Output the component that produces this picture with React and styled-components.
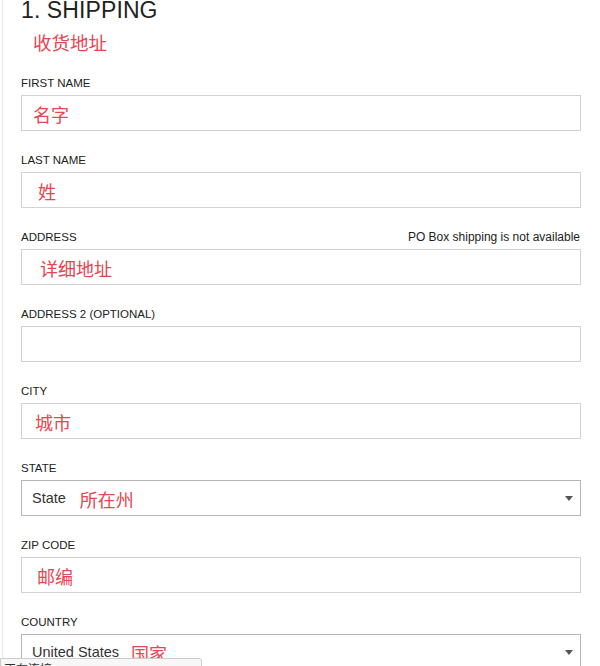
import React from "react";
import styled, { createGlobalStyle } from "styled-components";

const GlobalStyle = createGlobalStyle`
  body {
    margin: 0;
    background: #fff;
    font-family: "Liberation Sans", Arial, sans-serif;
    overflow: hidden;
  }
`;

const Page = styled.div`
  margin-left: 2px;
  border-left: 1px solid #e8e8e8;
  padding-left: 18px;
  width: 560px;
  min-height: 700px;
`;

const Title = styled.h1`
  margin: 0;
  font-size: 23px;
  line-height: 21px;
  font-weight: normal;
  color: #222;
  letter-spacing: 0.1px;
`;

const Subtitle = styled.div`
  margin-top: 12px;
  padding-left: 12px;
  font-family: "Noto Sans CJK SC", sans-serif;
  font-size: 18.5px;
  line-height: 18px;
  color: #e64552;
`;

const Form = styled.div`
  display: flex;
  flex-direction: column;
  gap: 22px;
  margin-top: 25px;
`;

const Field = styled.div`
  display: flex;
  flex-direction: column;
  gap: 5px;
`;

const LabelRow = styled.div`
  display: flex;
  justify-content: space-between;
  align-items: baseline;
  height: 14px;
`;

const Label = styled.span`
  font-size: 11.5px;
  line-height: 14px;
  color: #222;
`;

const Note = styled.span`
  font-size: 12px;
  line-height: 14px;
  color: #222;
  padding-right: 1px;
`;

const Box = styled.div`
  display: flex;
  align-items: center;
  height: 36px;
  box-sizing: border-box;
  border: 1px solid ${(p) => (p.$select ? "#b5b5b5" : "#d2d2d2")};
  padding-left: 10px;
  background: #fff;
`;

const Value = styled.span`
  font-size: 14.5px;
  color: #333;
  margin-right: ${(p) => p.$gap}px;
`;

const Hint = styled.span`
  font-family: "Noto Sans CJK SC", sans-serif;
  font-size: 18px;
  line-height: 18px;
  padding-top: 2px;
  padding-left: ${(p) => p.$offset || 0}px;
  color: #e64552;
`;

const Arrow = styled.span`
  margin-left: auto;
  margin-right: 7px;
  width: 0;
  height: 0;
  border-left: 4px solid transparent;
  border-right: 4px solid transparent;
  border-top: 5px solid #555;
`;

const StatusBar = styled.div`
  position: fixed;
  left: 0;
  bottom: -13px;
  width: 197px;
  height: 19px;
  border: 1px solid #ccc;
  border-radius: 0 3px 0 0;
  background: #f7f7f7;
  font-family: "Noto Sans CJK SC", sans-serif;
  font-size: 12px;
  line-height: 19px;
  padding-left: 3px;
  color: #333;
`;

const fields = [
  { label: "FIRST NAME", hint: "名字", offset: 1 },
  { label: "LAST NAME", hint: "姓", offset: 6 },
  { label: "ADDRESS", hint: "详细地址", offset: 8, note: "PO Box shipping is not available" },
  { label: "ADDRESS 2 (OPTIONAL)" },
  { label: "CITY", hint: "城市", offset: 3 },
  { label: "STATE", value: "State", gap: 14, hint: "所在州", select: true },
  { label: "ZIP CODE", hint: "邮编", offset: 5 },
  { label: "COUNTRY", value: "United States", gap: 12, hint: "国家", select: true },
];

export default function App() {
  return (
    <>
      <GlobalStyle />
      <Page>
        <Title>1. SHIPPING</Title>
        <Subtitle>收货地址</Subtitle>
        <Form>
          {fields.map((f) => (
            <Field key={f.label}>
              <LabelRow>
                <Label>{f.label}</Label>
                {f.note && <Note>{f.note}</Note>}
              </LabelRow>
              <Box $select={f.select}>
                {f.value && <Value $gap={f.gap}>{f.value}</Value>}
                {f.hint && <Hint $offset={f.offset}>{f.hint}</Hint>}
                {f.select && <Arrow />}
              </Box>
            </Field>
          ))}
        </Form>
      </Page>
      <StatusBar>正在连接...</StatusBar>
    </>
  );
}
